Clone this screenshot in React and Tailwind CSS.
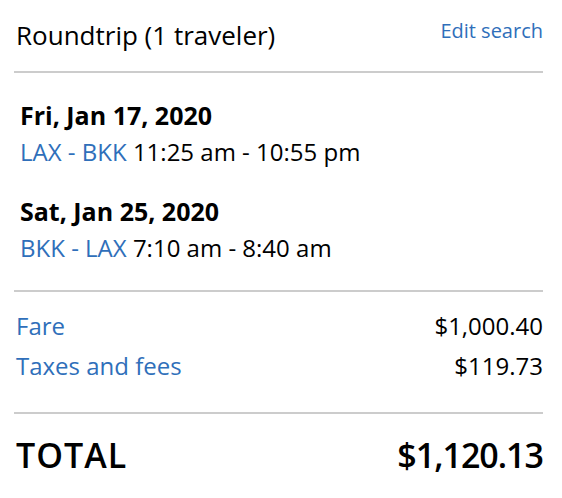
const flights = [
  { date: 'Fri, Jan 17, 2020', route: 'LAX - BKK', time: '11:25 am - 10:55 pm' },
  { date: 'Sat, Jan 25, 2020', route: 'BKK - LAX', time: '7:10 am - 8:40 am' },
];

const App = () => {
  return (
    <div className="w-[562px] h-[498px] bg-white pl-[14px] pr-[19px] text-black font-['Open_Sans',sans-serif]">
      {/* Header */}
      <div className="h-[71px] flex items-start justify-between pl-[2px]">
        <span className="mt-[18px] text-[26px] leading-[35px]">Roundtrip (1 traveler)</span>
        <a href="#" className="mt-[17px] text-[20px] leading-[28px] text-[#2f6fba]">
          Edit search
        </a>
      </div>
      <div className="h-[2px] bg-[#cccccc]" />

      {/* Flights */}
      <div className="h-[217px] pt-[25px] pl-[6px] flex flex-col gap-[26px]">
        {flights.map((f) => (
          <div key={f.date} className="flex flex-col">
            <span className="text-[25px] leading-[34px] font-bold">{f.date}</span>
            <span className="mt-[4px] text-[24px] leading-[32px]">
              <span className="text-[#2f6fba]">{f.route}</span> {f.time}
            </span>
          </div>
        ))}
      </div>
      <div className="h-[2px] bg-[#cccccc]" />

      {/* Price breakdown */}
      <div className="h-[120px] pt-[18px] pl-[2px] flex flex-col gap-[8px] text-[24px] leading-[32px]">
        <div className="flex justify-between">
          <span className="text-[#2f6fba]">Fare</span>
          <span>$1,000.40</span>
        </div>
        <div className="flex justify-between">
          <span className="text-[#2f6fba]">Taxes and fees</span>
          <span>$119.73</span>
        </div>
      </div>
      <div className="h-[2px] bg-[#cccccc]" />

      {/* Total */}
      <div className="flex justify-between items-center pl-[2px] pt-[19px] font-semibold text-[34px] leading-[44px]">
        <span className="tracking-[1px]">TOTAL</span>
        <span className="tracking-[-1px]">$1,120.13</span>
      </div>
    </div>
  );
};

export default App;
